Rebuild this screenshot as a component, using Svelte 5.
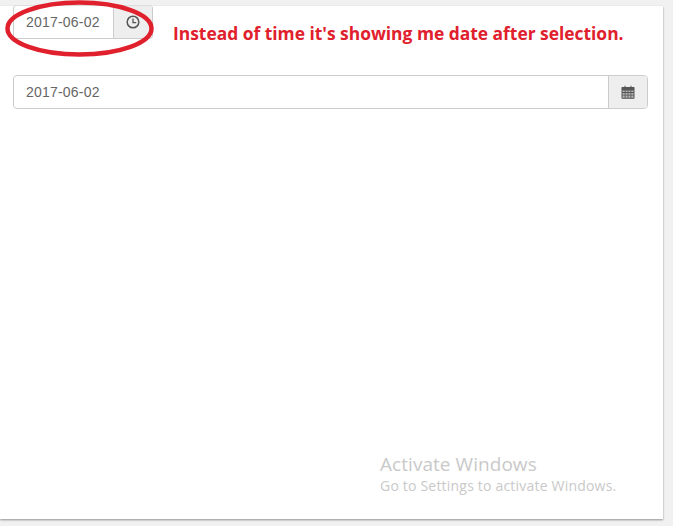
<script>
    const dateValue = '2017-06-02';
</script>

<div class="page">
    <main class="card">
        <div class="top-row">
            <div class="input-group small">
                <div class="field">{dateValue}</div>
                <span class="addon">
                    <svg width="14" height="14" viewBox="0 0 14 14" fill="none" stroke="#555" aria-hidden="true">
                        <circle cx="7" cy="7" r="5.800" stroke-width="1.500" />
                        <path d="M7 3.400V7.600H10.200" stroke-width="1.300" />
                    </svg>
                </span>
            </div>
            <p class="note">Instead of time it's showing me date after selection.</p>
        </div>

        <div class="input-group wide">
            <div class="field">{dateValue}</div>
            <span class="addon">
                <svg width="14" height="14" viewBox="0 0 14 14" aria-hidden="true">
                    <rect x="1" y="5" width="12" height="8.500" fill="#b4b4b4" />
                    <path fill="#555" fill-rule="evenodd" d="M1 2h2.500V.8h1V2h5V.8h1V2H13a.8.8 0 0 1 .5.8V13a.8.8 0 0 1-.8.8H1.300a.8.800 0 0 1-.8-.8V2.800A.8.800 0 0 1 1 2ZM1.500 5.500v1.600h2.200V5.500Zm3 0v1.600h2.100V5.500Zm2.900 0v1.600h2.100V5.500Zm2.900 0v1.600h2.200V5.500ZM1.500 7.900v1.800h2.200V7.900Zm3 0v1.800h2.100V7.900Zm2.900 0v1.800h2.100V7.900Zm2.900 0v1.800h2.200V7.900ZM1.500 10.500v2.300h2.200v-2.300Zm3 0v2.300h2.100v-2.300Zm2.900 0v2.300h2.100v-2.300Zm2.900 0v2.300h2.200v-2.300Z" />
                </svg>
            </span>
        </div>

        <div class="activate">
            <div class="activate-title">Activate Windows</div>
            <div class="activate-sub">Go to Settings to activate Windows.</div>
        </div>
    </main>

    <!-- hand drawn annotation over the first input -->
    <svg class="circle" width="160" height="60" viewBox="0 0 160 60" aria-hidden="true">
        <ellipse cx="79.500" cy="28.500" rx="72" ry="26" fill="none" stroke="#e0202c" stroke-width="4.500" />
    </svg>
</div>

<style>
    :global(body) {
        background: #f1f1f1;
        font-family: "Liberation Sans", Arial, sans-serif;
    }

    .page {
        position: relative;
        width: 673px;
        height: 526px;
        padding-top: 6px;
        box-sizing: border-box;
        overflow: hidden;
    }

    .card {
        position: relative;
        width: 663px;
        height: 513px;
        box-sizing: border-box;
        padding: 0 15px 0 13px;
        background: #fff;
        box-shadow: 0 1px 2px rgba(0, 0, 0, 0.4);
    }

    .top-row {
        display: flex;
        align-items: center;
        gap: 20px;
        height: 33px;
        margin-bottom: 36px;
    }

    .input-group {
        display: flex;
        height: 34px;
        box-sizing: border-box;
        border: 1px solid #ccc;
        border-radius: 4px;
        font-size: 14px;
        letter-spacing: 0.2px;
        color: #666;
    }

    .input-group.small {
        width: 140px;
        flex: none;
        margin-top: -1px;
        border-top-color: #ddd;
    }

    .input-group.wide {
        width: 635px;
    }

    .field {
        flex: 1;
        padding-left: 12px;
        line-height: 32px;
    }

    .addon {
        width: 38px;
        display: flex;
        align-items: center;
        justify-content: center;
        background: #eee;
        border-left: 1px solid #ccc;
        border-radius: 0 3px 3px 0;
    }

    .note {
        margin: 20px 0 0;
        font-family: "Open Sans", sans-serif;
        font-size: 17.400px;
        font-weight: 700;
        color: #e0202c;
        white-space: nowrap;
    }

    .activate {
        position: absolute;
        left: 380px;
        top: 446px;
        font-family: "Open Sans", sans-serif;
        color: #c9c9c9;
    }

    .activate-title {
        font-size: 19px;
        letter-spacing: 0.05px;
        line-height: 24px;
    }

    .activate-sub {
        font-size: 14px;
        letter-spacing: 0.2px;
        line-height: 20px;
    }

    .circle {
        position: absolute;
        left: 0;
        top: 0;
    }
</style>
